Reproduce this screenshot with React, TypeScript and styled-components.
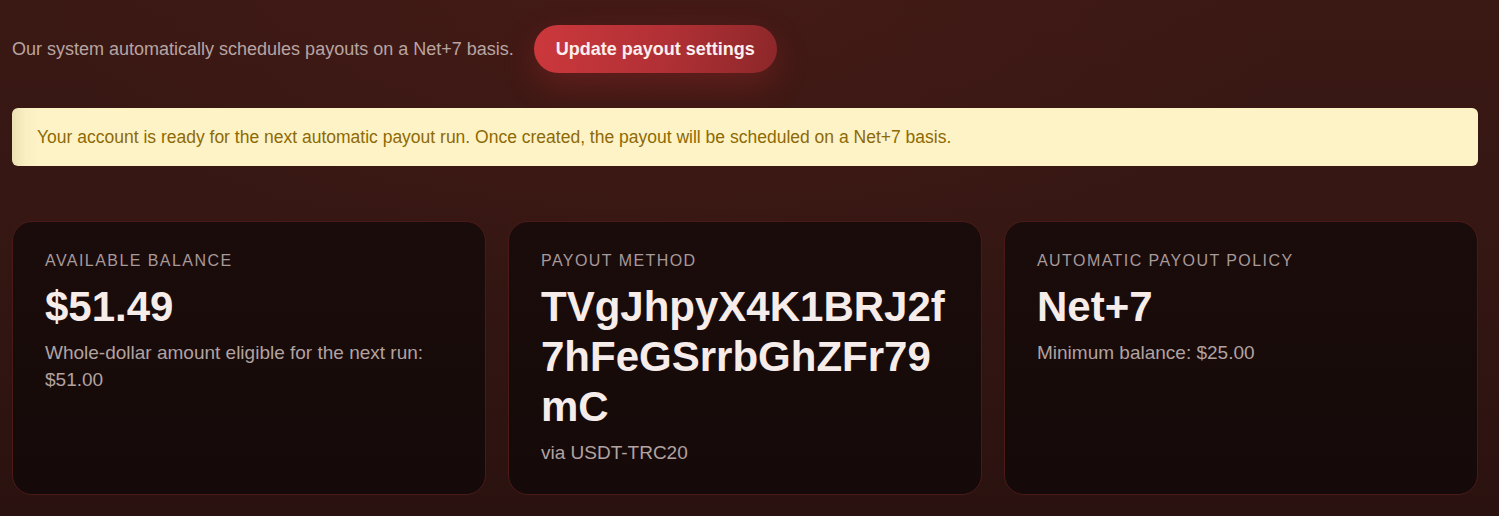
import React from "react";
import styled, { createGlobalStyle } from "styled-components";

const Global = createGlobalStyle`
  html, body {
    margin: 0;
    padding: 0;
    background: #2f1412;
  }
  body {
    font-family: "Liberation Sans", Arial, sans-serif;
  }
  * { box-sizing: border-box; }
`;

const Page = styled.div`
  min-height: 516px;
  padding: 25px 21px 20px 12px;
  background:
    radial-gradient(ellipse 900px 420px at 45% 0%, rgba(80, 28, 24, 0.45), transparent 70%),
    linear-gradient(180deg, #3a1814 0%, #361713 40%, #2a1210 100%);
  display: flex;
  flex-direction: column;
`;

const TopBar = styled.div`
  display: flex;
  align-items: center;
  gap: 20px;
  height: 48px;
`;

const Intro = styled.p`
  margin: 0;
  font-size: 18px;
  color: #b8a5a2;
`;

const PrimaryButton = styled.button`
  height: 48px;
  padding: 0 22px;
  border: none;
  border-radius: 999px;
  background: linear-gradient(100deg, #cc383c 0%, #b03035 55%, #8c2729 100%);
  color: #fbeeee;
  font-family: "Liberation Sans", Arial, sans-serif;
  font-weight: 700;
  font-size: 18px;
  cursor: pointer;
  box-shadow: 0 12px 32px rgba(190, 45, 45, 0.28);
`;

const Alert = styled.div`
  margin-top: 35px;
  height: 58px;
  display: flex;
  align-items: center;
  padding: 0 25px;
  border-radius: 6px;
  background: linear-gradient(90deg, #ece1b2 0px, #faefc3 14px, #fef3c7 28px, #fef3c7 100%);
  color: #8d6a05;
  font-size: 17.5px;
`;

const CardGrid = styled.div`
  margin-top: 55px;
  display: grid;
  grid-template-columns: repeat(3, 1fr);
  gap: 22px;
`;

const Card = styled.div`
  height: 274px;
  padding: 30px 32px;
  border: 1px solid #4a1a19;
  border-radius: 20px;
  background: linear-gradient(180deg, #1a0c0b 0%, #150a09 100%);
  display: flex;
  flex-direction: column;
`;

const Label = styled.div`
  font-size: 16px;
  letter-spacing: 0.09em;
  text-transform: uppercase;
  color: #a8999a;
  line-height: 18px;
`;

const Value = styled.div`
  margin-top: 12px;
  font-size: 42px;
  font-weight: 700;
  line-height: 50px;
  color: #f6ecea;
  word-break: break-all;
`;

const Sub = styled.div`
  margin-top: 7px;
  font-size: 19px;
  line-height: 27px;
  color: #b2a2a0;
`;

type Item = { label: string; value: string; sub: string };

const items: Item[] = [
  {
    label: "Available balance",
    value: "$51.49",
    sub: "Whole-dollar amount eligible for the next run: $51.00",
  },
  {
    label: "Payout method",
    value: "TVgJhpyX4K1BRJ2f7hFeGSrrbGhZFr79mC",
    sub: "via USDT-TRC20",
  },
  {
    label: "Automatic payout policy",
    value: "Net+7",
    sub: "Minimum balance: $25.00",
  },
];

export default function App() {
  return (
    <>
      <Global />
      <Page>
        <TopBar>
          <Intro>Our system automatically schedules payouts on a Net+7 basis.</Intro>
          <PrimaryButton>Update payout settings</PrimaryButton>
        </TopBar>
        <Alert>
          Your account is ready for the next automatic payout run. Once created, the payout will be scheduled on a Net+7 basis.
        </Alert>
        <CardGrid>
          {items.map((it) => (
            <Card key={it.label}>
              <Label>{it.label}</Label>
              <Value>{it.value}</Value>
              <Sub>{it.sub}</Sub>
            </Card>
          ))}
        </CardGrid>
      </Page>
    </>
  );
}
